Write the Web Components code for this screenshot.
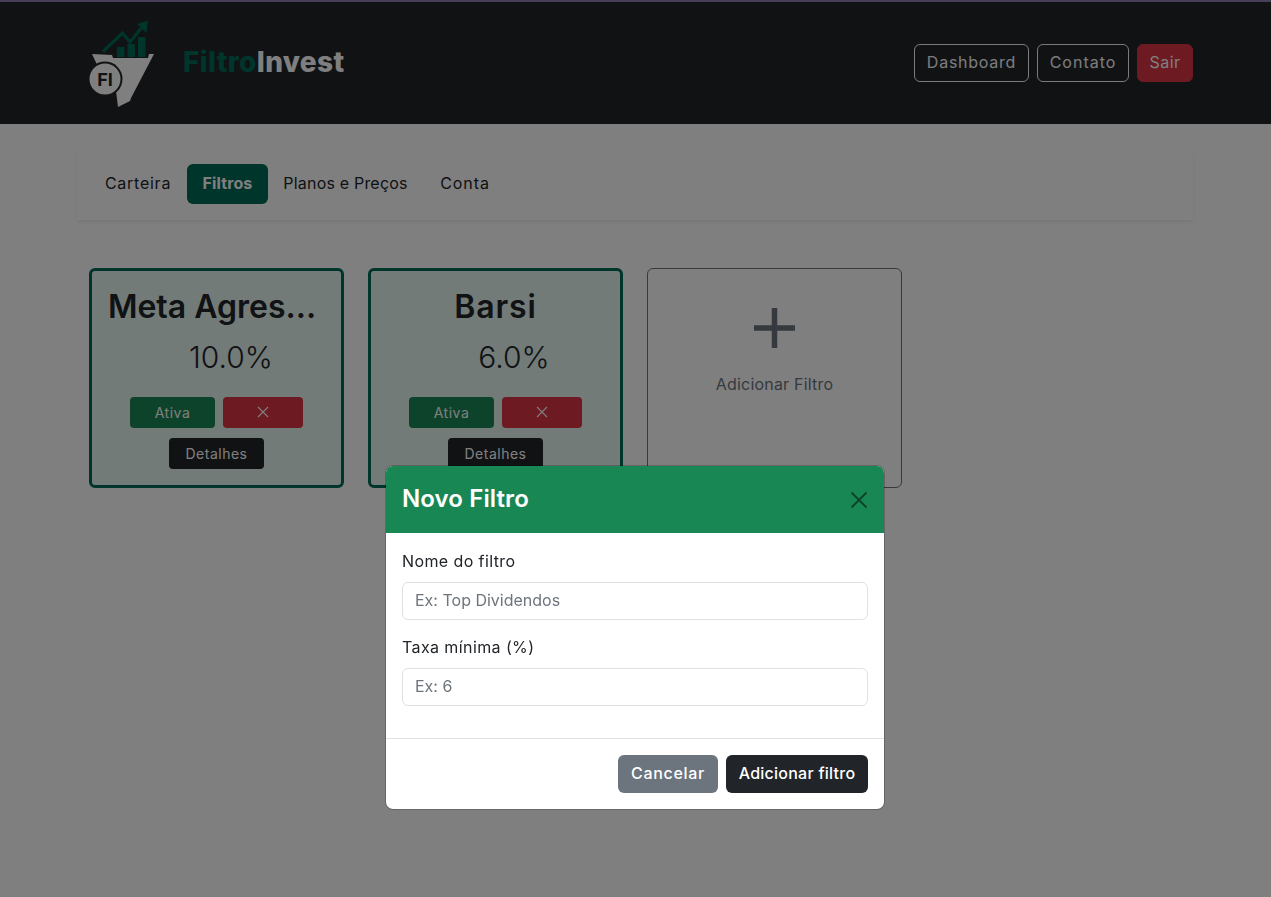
<!DOCTYPE html>
<html lang="pt-BR">
<head>
<meta charset="utf-8">
<title>FiltroInvest</title>
<style>
	html, body { margin: 0; height: 100%; overflow: hidden; background: #fff; }
	body { font-family: Inter, "Noto Sans", sans-serif; font-size: 16px; color: #212529; }
</style>
</head>
<body>
	<app-header></app-header>
	<main-page>
		<tab-bar slot="tabs"></tab-bar>
		<filter-card title="Meta Agres..." rate="10.0%" shift="29" title-css="padding-right: 9px; letter-spacing: 0"></filter-card>
		<filter-card title="Barsi" rate="6.0%" shift="37" title-css="letter-spacing: 0.9px"></filter-card>
		<add-card>Adicionar Filtro</add-card>
	</main-page>
	<new-filter-modal></new-filter-modal>

<script>
class AppHeader extends HTMLElement {
	constructor() {
		super();
		this.attachShadow({ mode: 'open' });
	}

	connectedCallback() {
		this.shadowRoot.innerHTML = `
			<style>
				:host { display: block; background: #212529; border-top: 2px solid #8e7fae; height: 122px; }
				.wrap { box-sizing: border-box; width: 1116px; height: 100%; margin-left: 77px; display: flex; align-items: center; justify-content: space-between; }
				.brand { display: flex; align-items: center; gap: 23px; padding-left: 8px; }
				svg { display: block; width: 75px; height: 95px; }
				.name { font-size: 28px; font-weight: 800; letter-spacing: 0.35px; color: #fff; padding-bottom: 3px; }
				.name span { color: #006a57; }
				nav { display: flex; gap: 8px; }
				a { box-sizing: border-box; height: 38px; display: flex; align-items: center; justify-content: center; padding-bottom: 2px; border: 1px solid #f8f9fa; border-radius: 6px; color: #f8f9fa; }
				a.out { background: #dc3545; border-color: #dc3545; color: #fff; }
			</style>
			<div class="wrap">
				<div class="brand">
					<svg viewBox="85 15 75 95">
						<path fill="#fff" d="M92 53L112 54L113 57L148 57L149 53L154 53L131 97L130 100L118 106L116 90L100 70Z"/>
						<circle cx="105" cy="78" r="17.500" fill="#212529"/>
						<circle cx="105" cy="78" r="15.500" fill="#fff"/>
						<text x="105" y="84.500" text-anchor="middle" font-family="Inter, sans-serif" font-weight="700" font-size="18" fill="#212529">FI</text>
						<rect x="117" y="46" width="7.500" height="10" fill="#006a57"/>
						<rect x="127.500" y="43" width="7.500" height="13" fill="#006a57"/>
						<rect x="138" y="36" width="7.500" height="20" fill="#006a57"/>
						<path fill="none" stroke="#006a57" stroke-width="3.200" d="M103 50.500L122.500 32L130 41L143 25"/>
						<path fill="#006a57" d="M137 23L148 19.500L146.500 32Z"/>
					</svg>
					<div class="name"><span>Filtro</span>Invest</div>
				</div>
				<nav>
					<a style="width: 115px; letter-spacing: 0.75px">Dashboard</a>
					<a style="width: 92px; letter-spacing: 1px">Contato</a>
					<a class="out" style="width: 56px; letter-spacing: 0.5px">Sair</a>
				</nav>
			</div>
		`;
	}
}

class MainPage extends HTMLElement {
	constructor() {
		super();
		this.attachShadow({ mode: 'open' });
	}

	connectedCallback() {
		this.shadowRoot.innerHTML = `
			<style>
				:host { display: block; width: 1116px; margin: 28px 0 0 77px; }
				.cards { display: flex; gap: 24px; padding: 48px 12px 0; }
			</style>
			<slot name="tabs"></slot>
			<div class="cards"><slot></slot></div>
		`;
	}
}

class TabBar extends HTMLElement {
	constructor() {
		super();
		this.attachShadow({ mode: 'open' });
	}

	connectedCallback() {
		this.shadowRoot.innerHTML = `
			<style>
				:host { display: flex; box-sizing: border-box; height: 68px; padding: 12px; background: #fff; box-shadow: 0 2px 4px rgba(0, 0, 0, .075); }
				a { box-sizing: border-box; height: 40px; display: flex; align-items: center; justify-content: center; padding-bottom: 2px; border-radius: 6px; }
				a.on { background: #006a57; color: #fff; font-weight: 700; }
			</style>
			<a style="width: 98px; letter-spacing: 0.75px">Carteira</a>
			<a class="on" style="width: 81px; letter-spacing: 0.1px">Filtros</a>
			<a style="width: 157px; letter-spacing: 0.2px; padding-right: 2px">Planos e Preços</a>
			<a style="width: 82px; letter-spacing: 0.9px; padding-right: 2px">Conta</a>
		`;
	}
}

class FilterCard extends HTMLElement {
	constructor() {
		super();
		this.attachShadow({ mode: 'open' });
	}

	connectedCallback() {
		const title = this.getAttribute('title');
		const rate = this.getAttribute('rate');
		const shift = this.getAttribute('shift');
		const titleCss = this.getAttribute('title-css');
		this.shadowRoot.innerHTML = `
			<style>
				:host { display: block; box-sizing: border-box; width: 255px; height: 220px; border: 3px solid #006a57; border-radius: 6px; background: #e6f7f3; padding: 16px 0; text-align: center; }
				h5 { margin: 0; font-size: 32px; line-height: 40px; font-weight: 600; white-space: nowrap; }
				.rate { font-size: 30px; line-height: 40px; margin-top: 10px; font-weight: 300; padding-left: ${shift}px; }
				.row { display: flex; flex-wrap: wrap; justify-content: center; gap: 10px 8px; margin-top: 20px; }
				button { height: 31px; border: 0; border-radius: 4px; padding: 0 0 1px; color: #fff; font: 14px Inter, sans-serif; letter-spacing: 0.5px; }
				.state { width: 85px; background: #198754; }
				.drop { width: 80px; background: #dc3545; }
				.more { width: 95px; background: #212529; }
				svg { display: block; margin: auto; width: 12px; height: 12px; }
			</style>
			<h5 style="${titleCss}">${title}</h5>
			<div class="rate">${rate}</div>
			<div class="row">
				<button class="state">Ativa</button>
				<button class="drop"><svg viewBox="0 0 12 12"><path d="M1 1L11 11M11 1L1 11" stroke="#fff" stroke-width="1.100"/></svg></button>
				<button class="more">Detalhes</button>
			</div>
		`;
	}
}

class AddCard extends HTMLElement {
	constructor() {
		super();
		this.attachShadow({ mode: 'open' });
	}

	connectedCallback() {
		this.shadowRoot.innerHTML = `
			<style>
				:host { display: flex; flex-direction: column; align-items: center; box-sizing: border-box; width: 255px; height: 220px; border: 1px solid #6c757d; border-radius: 6px; color: #6c757d; padding-top: 39px; letter-spacing: 0.2px; }
				svg { display: block; width: 41px; height: 40px; margin-bottom: 26px; }
			</style>
			<svg viewBox="0 0 41 40"><path d="M0 20H41M20.500 0V40" stroke="#6c757d" stroke-width="5.500"/></svg>
			<slot></slot>
		`;
	}
}

class NewFilterModal extends HTMLElement {
	constructor() {
		super();
		this.attachShadow({ mode: 'open' });
	}

	connectedCallback() {
		this.shadowRoot.innerHTML = `
			<style>
				:host { display: block; position: fixed; inset: 0; background: rgba(0, 0, 0, .5); }
				.dialog { box-sizing: border-box; width: 500px; height: 345px; margin: 465px 0 0 385px; background: #fff; background-clip: padding-box; border: 1px solid rgba(0, 0, 0, .2); border-radius: 8px; overflow: hidden; display: flex; flex-direction: column; }
				header { box-sizing: border-box; height: 67px; background: #198754; display: flex; align-items: center; justify-content: space-between; padding: 0 16px 2px; }
				h2 { margin: 0; font-size: 24px; font-weight: 600; color: #fff; letter-spacing: 0.1px; }
				header svg { display: block; width: 18px; height: 18px; margin: 2px 0 0; }
				.body { flex: 1; padding: 16px 16px 0; }
				label { display: block; height: 24px; line-height: 24px; margin-bottom: 9px; letter-spacing: 0.4px; }
				input { display: block; box-sizing: border-box; width: 100%; height: 38px; margin-bottom: 15px; padding: 0 12px 2px; border: 1px solid #dee2e6; border-radius: 6px; font: 16px Inter, sans-serif; outline: 0; }
				input::placeholder { color: #6c757d; opacity: 1; }
				footer { height: 71px; box-sizing: border-box; border-top: 1px solid #dee2e6; display: flex; justify-content: flex-end; gap: 8px; padding: 16px 16px 0; }
				button { height: 38px; border: 0; border-radius: 6px; padding: 0 0 2px; color: #fff; font: 500 16px Inter, sans-serif; }
				.cancel { width: 100px; background: #6c757d; letter-spacing: 0.7px; }
				.add { width: 142px; background: #212529; letter-spacing: 0.25px; }
			</style>
			<div class="dialog">
				<header>
					<h2>Novo Filtro</h2>
					<svg viewBox="0 0 18 18"><path d="M1.500 1.500L16.500 16.500M16.500 1.500L1.500 16.500" stroke="#0d4429" stroke-width="1.800"/></svg>
				</header>
				<div class="body">
					<label>Nome do filtro</label>
					<input placeholder="Ex: Top Dividendos">
					<label>Taxa mínima (%)</label>
					<input placeholder="Ex: 6">
				</div>
				<footer>
					<button class="cancel">Cancelar</button>
					<button class="add">Adicionar filtro</button>
				</footer>
			</div>
		`;
	}
}

customElements.define('app-header', AppHeader);
customElements.define('main-page', MainPage);
customElements.define('tab-bar', TabBar);
customElements.define('filter-card', FilterCard);
customElements.define('add-card', AddCard);
customElements.define('new-filter-modal', NewFilterModal);
</script>
</body>
</html>
